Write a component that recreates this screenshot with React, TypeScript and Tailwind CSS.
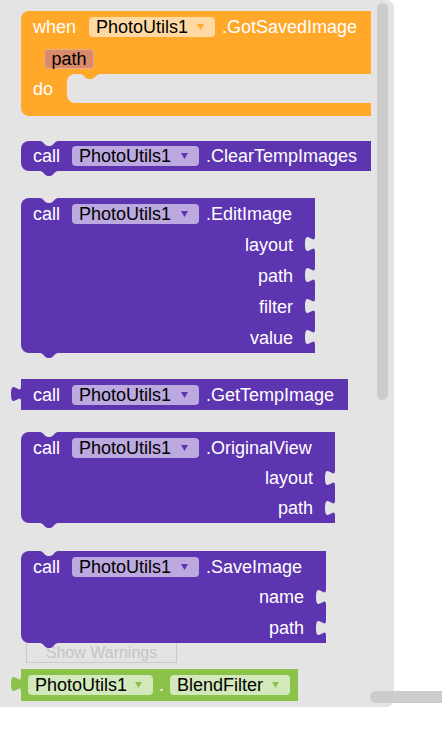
import React from "react";

const FONT = "font-['Liberation_Sans',Arial,sans-serif]";

// dropdown field inside a block
function Field({ text, bg, arrow, w }: { text: string; bg: string; arrow: string; w: string }) {
  return (
    <div className={`flex h-[20px] shrink-0 items-center rounded-[4px] pl-[7px] pr-[11px] text-[18px] leading-none text-black ${bg} ${w}`}>
      <span>{text}</span>
      <svg className="ml-auto" width="7" height="6" viewBox="0 0 7 6">
        <path d="M0,0 H7 L3.5,6 Z" fill={arrow} />
      </svg>
    </div>
  );
}

// notch cut into the top edge
function TopNotch() {
  return (
    <svg className="absolute left-[19px] top-0" width="18" height="5" viewBox="0 0 18 5">
      <path d="M0,0 C3,0 5,5 8,5 H10 C13,5 15,0 18,0 Z" fill="#e4e4e4" />
    </svg>
  );
}

// bump hanging below the bottom edge
function BottomBump({ color }: { color: string }) {
  return (
    <svg className="absolute left-[19px] top-full" width="18" height="5" viewBox="0 0 18 5">
      <path d="M0,0 C3,0 5,5 8,5 H10 C13,5 15,0 18,0 Z" fill={color} />
    </svg>
  );
}

// puzzle tab: gray cutout on the right or coloured tab on the left
function Tab({ color, side }: { color: string; side: "left" | "right" }) {
  return (
    <svg
      className={side === "right" ? "absolute right-0 top-[7px]" : "absolute left-[-10px] top-[7px]"}
      width="10"
      height="16"
      viewBox="0 0 8 15"
      preserveAspectRatio="none"
    >
      <path d="M8,0 c0,10 -8,-8 -8,7.5 s8,-2.5 8,7.5 Z" fill={color} />
    </svg>
  );
}

function InputRow({ label, h }: { label: string; h: string }) {
  return (
    <div className={`relative flex items-center justify-end pr-[22px] ${h}`}>
      <span className="text-[18px] leading-none text-white">{label}</span>
      <Tab color="#e4e4e4" side="right" />
    </div>
  );
}

function CallRow({ method, h }: { method: string; h: string }) {
  return (
    <div className={`flex items-center pl-[12px] ${h}`}>
      <span className="text-[18px] leading-none text-white">call</span>
      <div className="ml-[12px]">
        <Field text="PhotoUtils1" bg="bg-[#bba9df]" arrow="#5e35b1" w="w-[127px]" />
      </div>
      <span className="ml-[7px] text-[18px] leading-none text-white">{method}</span>
    </div>
  );
}

function CallBlock({
  method,
  inputs,
  w,
  mt,
  rowH = "h-[31px]",
}: {
  method: string;
  inputs: string[];
  w: string;
  mt: string;
  rowH?: string;
}) {
  return (
    <div className={`relative z-10 rounded-l-[8px] bg-[#5e35b1] ${w} ${mt}`}>
      <TopNotch />
      <CallRow method={method} h={inputs.length ? "h-[31px]" : "h-[30px]"} />
      {inputs.map((i) => (
        <InputRow key={i} label={i} h={rowH} />
      ))}
      <BottomBump color="#5e35b1" />
    </div>
  );
}

export default function App() {
  return (
    <div className={`relative h-[735px] w-[442px] overflow-hidden bg-white ${FONT}`}>
      <div className="relative flex h-[707px] w-[394px] flex-col overflow-hidden rounded-r-[8px] bg-[#e4e4e4] pl-[21px] pt-[11px]">
        {/* event block */}
        <div className="relative z-10 flex w-[350px] flex-col rounded-[8px] rounded-r-none bg-[#ffa82a]">
          <div className="flex h-[32px] items-center pl-[12px]">
            <span className="text-[18px] leading-none text-white">when</span>
            <div className="ml-[13px]">
              <Field text="PhotoUtils1" bg="bg-[#ffd9a3]" arrow="#ffa82a" w="w-[126px]" />
            </div>
            <span className="ml-[7px] text-[18px] leading-none text-white">.GotSavedImage</span>
          </div>
          <div className="flex h-[31px] items-center pl-[23px]">
            <div className="flex h-[20px] w-[50px] items-center justify-center rounded-[4px] border border-[#eba98a] bg-[#d98a69] text-[18px] leading-none text-black">
              path
            </div>
          </div>
          <div className="flex h-[29px] items-center">
            <span className="w-[46px] pl-[12px] text-[18px] leading-none text-white">do</span>
            <div className="relative h-full flex-1 rounded-l-[8px] bg-[#e4e4e4]">
              <svg className="absolute left-[13px] top-0" width="20" height="5" viewBox="0 0 18 5" preserveAspectRatio="none">
                <path d="M0,0 C3,0 5,5 8,5 H10 C13,5 15,0 18,0 Z" fill="#ffa82a" />
              </svg>
            </div>
          </div>
          <div className="h-[13px] rounded-bl-[8px]" />
        </div>

        <CallBlock method=".ClearTempImages" inputs={[]} w="w-[350px]" mt="mt-[25px]" />
        <CallBlock method=".EditImage" inputs={["layout", "path", "filter", "value"]} w="w-[294px]" mt="mt-[27px]" />

        {/* value block */}
        <div className="relative z-10 mt-[26px] w-[327px] bg-[#5e35b1]">
          <Tab color="#5e35b1" side="left" />
          <CallRow method=".GetTempImage" h="h-[31px]" />
        </div>

        <CallBlock method=".OriginalView" inputs={["layout", "path"]} w="w-[314px]" mt="mt-[22px]" rowH="h-[30px]" />
        <CallBlock method=".SaveImage" inputs={["name", "path"]} w="w-[305px]" mt="mt-[28px]" rowH="h-[30.5px]" />

        {/* getter block */}
        <div className="relative z-10 mt-[26px] flex h-[32px] w-[277px] items-center bg-[#8bc34a] pl-[7px]">
          <Tab color="#8bc34a" side="left" />
          <Field text="PhotoUtils1" bg="bg-[#d3e8bb]" arrow="#8bc34a" w="w-[125px]" />
          <span className="mx-[6px] text-[18px] leading-none text-white">.</span>
          <Field text="BlendFilter" bg="bg-[#d3e8bb]" arrow="#8bc34a" w="w-[120px]" />
        </div>

        <div className="absolute left-[26px] top-[642px] z-0 flex h-[21px] w-[151px] items-center justify-center border border-[#c9c9c9] text-[16px] leading-none text-[#c4c4c4]">
          Show Warnings
        </div>

        <div className="absolute left-[377px] top-[3px] h-[397px] w-[11px] rounded-full bg-[#cccccc]" />
      </div>
      <div className="absolute left-[370px] top-[691px] h-[12px] w-[80px] rounded-full bg-[#cccccc]" />
    </div>
  );
}
